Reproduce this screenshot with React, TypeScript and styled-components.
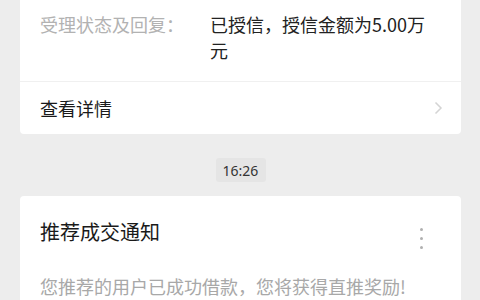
import React from "react";
import styled, { createGlobalStyle } from "styled-components";

const GlobalStyle = createGlobalStyle`
  html, body {
    margin: 0;
    padding: 0;
    background: #ededed;
    font-family: "Noto Sans CJK SC", "Noto Sans", sans-serif;
  }
`;

const Page = styled.div`
  width: 480px;
  height: 300px;
  overflow: hidden;
  box-sizing: border-box;
  padding: 0 19px 0 20px;
`;

const Card = styled.div<{ $top?: number }>`
  background: #fff;
  border-radius: 4px;
  margin-top: ${(p) => p.$top ?? 0}px;
`;

const InfoList = styled.div`
  display: flex;
  flex-direction: column;
  gap: 9px;
  padding: 0 20px 18px 20px;
`;

const InfoRow = styled.div`
  display: grid;
  grid-template-columns: 170px 230px;
  font-size: 18px;
  line-height: 26px;
`;

const Label = styled.div`
  color: #b2b2b2;
`;

const Value = styled.div`
  color: #222;
`;

const LinkRow = styled.div`
  display: flex;
  align-items: center;
  justify-content: space-between;
  height: 52px;
  padding: 0 18px 0 20px;
  border-top: 1px solid #f0f0f0;
  font-size: 18px;
  color: #1a1a1a;
`;

const Chevron = () => (
  <svg width="9" height="14" viewBox="0 0 9 14">
    <path d="M1.5 1.5 L7 7 L1.5 12.5" fill="none" stroke="#d4d4d4" strokeWidth="1.5" />
  </svg>
);

const TimeWrap = styled.div`
  display: flex;
  justify-content: center;
  margin: 24px 0 14px;
`;

const TimePill = styled.span`
  display: inline-flex;
  align-items: center;
  justify-content: center;
  width: 50px;
  height: 24px;
  border-radius: 3px;
  background: #e5e5e5;
  font-size: 14px;
  color: #333;
  font-family: "Noto Sans", sans-serif;
`;

const CardHead = styled.div`
  display: flex;
  justify-content: space-between;
  align-items: flex-start;
  padding: 22px 38px 0 20px;
`;

const Title = styled.div`
  font-size: 20px;
  line-height: 28px;
  color: #1a1a1a;
`;

const Dots = styled.div`
  display: flex;
  flex-direction: column;
  gap: 6px;
  padding-top: 10px;
  span {
    width: 3px;
    height: 3px;
    border-radius: 50%;
    background: #b0b0b0;
  }
`;

const Body = styled.div`
  padding: 24px 20px 20px;
  font-size: 18px;
  line-height: 26px;
  color: #a8a8a8;
  white-space: nowrap;
`;

export default function App() {
  return (
    <>
      <GlobalStyle />
      <Page>
        <Card $top={-24}>
          <InfoList>
            <InfoRow>
              <Label>申请时间：</Label>
              <Value>2021年06月18日 16:20</Value>
            </InfoRow>
            <InfoRow>
              <Label>受理状态及回复：</Label>
              <Value>已授信，授信金额为5.00万元</Value>
            </InfoRow>
          </InfoList>
          <LinkRow>
            <span>查看详情</span>
            <Chevron />
          </LinkRow>
        </Card>
        <TimeWrap>
          <TimePill>16:26</TimePill>
        </TimeWrap>
        <Card>
          <CardHead>
            <Title>推荐成交通知</Title>
            <Dots>
              <span />
              <span />
              <span />
            </Dots>
          </CardHead>
          <Body>您推荐的用户已成功借款，您将获得直推奖励!</Body>
        </Card>
      </Page>
    </>
  );
}
